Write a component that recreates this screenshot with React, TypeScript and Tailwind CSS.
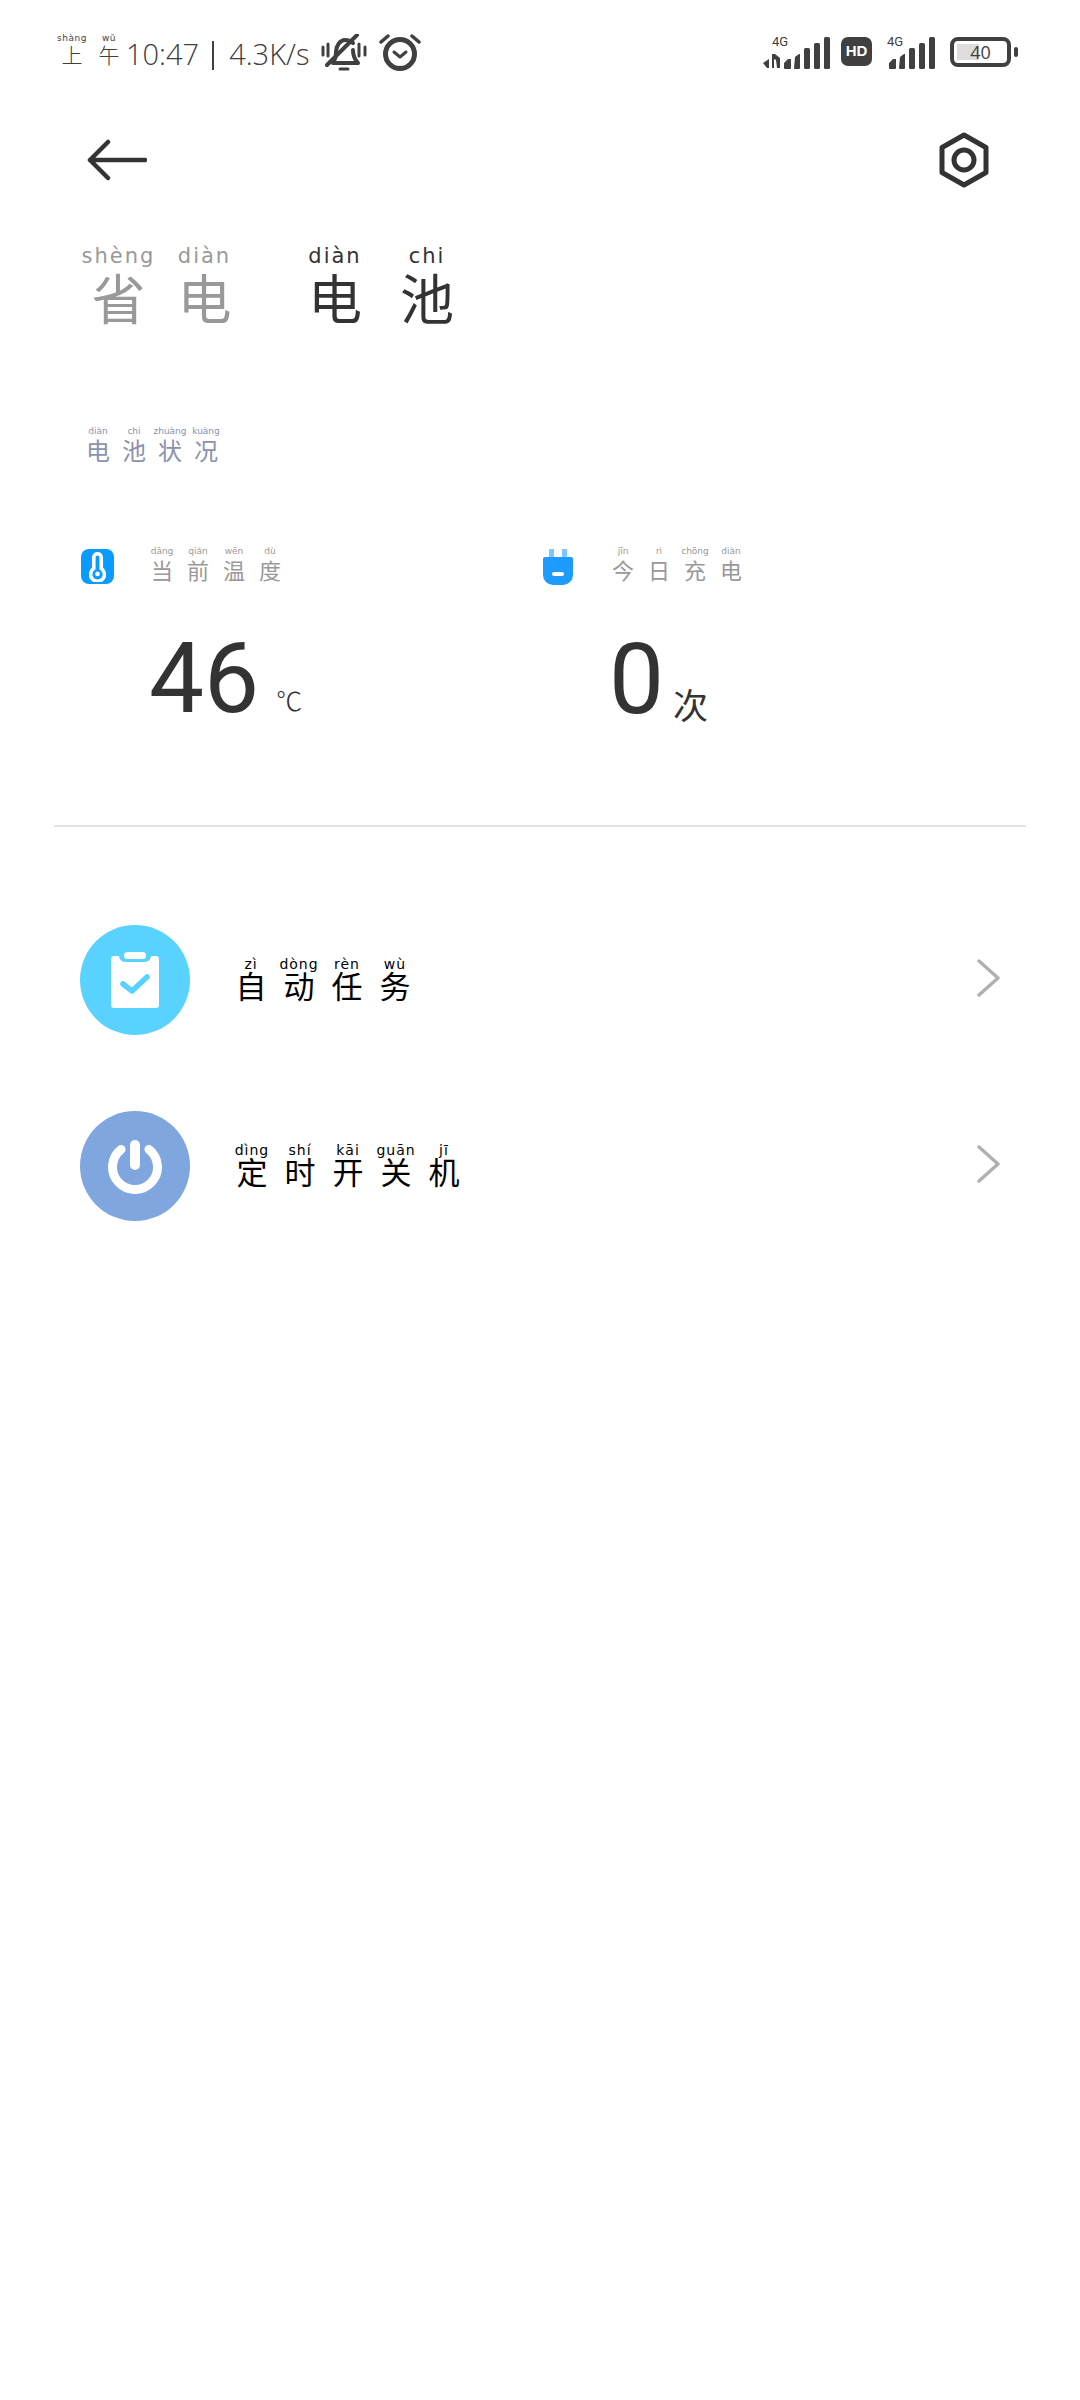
type Pair = [string, string];

// one character with its pinyin on top
function StatusChar({ py, ch, w }: { py: string; ch: string; w: string }) {
  return (
    <div className={`flex flex-col items-center ${w}`}>
      <span className="text-[9px] leading-[10px] h-[10px] tracking-[0.5px] font-['DejaVu_Sans',sans-serif] whitespace-nowrap">{py}</span>
      <span className="text-[21px] leading-[22px] font-light">{ch}</span>
    </div>
  );
}

function Word({ items, cell, py, ch, color }: { items: Pair[]; cell: string; py: string; ch: string; color: string }) {
  return (
    <div className={`flex ${color}`}>
      {items.map(([p, c], i) => (
        <div key={i} className={`flex flex-col items-center ${cell}`}>
          <span className={`${py} whitespace-nowrap font-['DejaVu_Sans',sans-serif]`}>{p}</span>
          <span className={ch}>{c}</span>
        </div>
      ))}
    </div>
  );
}

function SignalBars({ lost }: { lost?: boolean }) {
  return (
    <svg width={lost ? 68 : 48} height="32" viewBox={lost ? "0 0 68 32" : "20 0 48 32"} fill="#404040">
      {lost && (
        <>
          <path d="M0 26l6-4v9H4z" />
          <path d="M9 17h3l5 4v10h-3l-1-8-2-1v9H9z" />
        </>
      )}
      <path d="M21 26l4-4h3v9a1 1 0 0 1-1 1h-5a1 1 0 0 1-1-1z" />
      <path d="M32 20l4-3h1v14a1 1 0 0 1-1 1h-4a1 1 0 0 1-1-1z" />
      <rect x="41" y="11" width="6" height="21" rx="1.5" />
      <rect x="51" y="6" width="6" height="26" rx="1.5" />
      <rect x="61" y="0" width="6" height="32" rx="1.5" />
    </svg>
  );
}

function Chevron() {
  return (
    <svg width="24" height="40" viewBox="0 0 24 40" fill="none" stroke="#b0b0b0" strokeWidth="3.4" strokeLinecap="round" strokeLinejoin="round">
      <path d="M3 3l19 17L3 37" />
    </svg>
  );
}

export default function App() {
  return (
    <div className="flex flex-col w-[1080px] h-[2400px] bg-white text-[#333333] font-['Noto_Sans_CJK_SC',sans-serif] overflow-hidden">
      {/* status bar */}
      <div className="flex justify-between h-[110px] pl-[56px] pr-[62px] pt-[33px] text-[#404040]">
        <div className="flex items-start">
          <StatusChar py="shàng" ch="上" w="w-[32px]" />
          <StatusChar py="wǔ" ch="午" w="w-[30px] ml-[6px]" />
          <span className="ml-[2px] mt-[5px] text-[29px] leading-[32px] font-['Open_Sans',sans-serif] font-light">10:47</span>
          <span className="ml-[13px] mt-[8px] w-[2px] h-[29px] bg-[#404040]" />
          <span className="ml-[15px] mt-[5px] text-[29px] leading-[32px] font-['Open_Sans',sans-serif] font-light">4.3K/s</span>
          <svg className="ml-[12px] mt-[1px]" width="46" height="40" viewBox="0 0 46 40" fill="none" stroke="#404040" strokeLinecap="round" strokeLinejoin="round">
            <path strokeWidth="4" d="M12 28c3-3 3-6 3-10 0-6 4-12 9-12 3 0 6 1 8 3M32 16c0 5 1 9 5 13H12" />
            <path strokeWidth="4" d="M6 31L36 1" />
            <path strokeWidth="3" d="M2 13v8M7 10v12M38 10v12M44 13v8" />
            <path strokeWidth="3" d="M19 35h8" />
          </svg>
          <svg className="ml-[12px]" width="42" height="38" viewBox="0 0 42 38" fill="none" stroke="#404040" strokeLinecap="round" strokeLinejoin="round">
            <circle cx="21" cy="21" r="14.5" strokeWidth="5" />
            <path strokeWidth="3" d="M15 19l6 5 6-5" />
            <path strokeWidth="3.5" d="M2 9l7-6M40 9l-7-6" />
          </svg>
        </div>
        <div className="flex items-start">
          <div className="relative mt-[4px]">
            <span className="absolute left-[9px] -top-[2px] text-[13px] leading-[14px] font-['Roboto',sans-serif]">4G</span>
            <SignalBars lost />
          </div>
          <div className="ml-[10px] mt-[4px] flex items-center justify-center w-[31px] h-[29px] rounded-[7px] bg-[#404040] text-white text-[15px] font-black font-['Liberation_Sans',sans-serif]">
            HD
          </div>
          <div className="relative ml-[16px] mt-[4px]">
            <span className="absolute -left-[1px] -top-[2px] text-[13px] leading-[14px] font-['Roboto',sans-serif]">4G</span>
            <SignalBars />
          </div>
          <div className="ml-[14px] mt-[4px] flex items-center">
            <div className="relative flex items-center justify-center w-[61px] h-[30px] rounded-[8px] border-[4px] border-[#404040]">
              <div className="absolute left-[3px] top-[3px] bottom-[3px] w-[22px] bg-[#dddddd]" />
              <span className="relative text-[18px] leading-[20px] font-['Open_Sans',sans-serif]">40</span>
            </div>
            <div className="ml-[3px] w-[4px] h-[10px] rounded-[2px] bg-[#404040]" />
          </div>
        </div>
      </div>

      {/* header */}
      <div className="flex justify-between items-center h-[100px] pl-[87px] pr-[90px]">
        <svg width="60" height="42" viewBox="0 0 60 42" fill="none" stroke="#333333" strokeWidth="4.5" strokeLinecap="round" strokeLinejoin="round">
          <path d="M58 21H3M21 3L3 21l18 18" />
        </svg>
        <svg width="52" height="56" viewBox="0 0 52 56" fill="none" stroke="#333333" strokeLinejoin="round">
          <path strokeWidth="5" d="M26 3l22 12.5v25L26 53 4 40.5v-25z" />
          <circle cx="26" cy="28" r="10" strokeWidth="5" />
        </svg>
      </div>

      {/* tabs */}
      <div className="flex mt-[35px] pl-[82px]">
        <Word
          items={[["shèng", "省"], ["diàn", "电"]]}
          cell="w-[73px] mr-[13px] last:mr-0"
          py="text-[21px] leading-[22px] tracking-[2px]"
          ch="text-[54px] leading-[60px]"
          color="text-[#999999]"
        />
        <div className="ml-[64px]">
          <Word
            items={[["diàn", "电"], ["chi", "池"]]}
            cell="w-[60px] mr-[32px] last:mr-0"
            py="text-[21px] leading-[22px] tracking-[2px]"
            ch="text-[54px] leading-[60px]"
            color="text-[#333333]"
          />
        </div>
      </div>

      {/* section title */}
      <div className="mt-[99px] pl-[80px]">
        <Word
          items={[["diàn", "电"], ["chi", "池"], ["zhuàng", "状"], ["kuàng", "况"]]}
          cell="w-[36px]"
          py="text-[9px] leading-[11px]"
          ch="text-[24px] leading-[26px]"
          color="text-[#8a92ad]"
        />
      </div>

      {/* stats */}
      <div className="flex mt-[83px]">
        <div className="flex flex-col w-[462px] pl-[81px]">
          <div className="flex items-start">
            <div className="flex items-center justify-center w-[33px] h-[35px] mt-[3px] rounded-[8px] bg-[#0a9bff]">
              <svg width="17" height="30" viewBox="0 0 16 28" fill="none" stroke="#ffffff" strokeWidth="3.4">
                <path d="M4.5 15.5V5a3.5 3.5 0 0 1 7 0v10.5a6.5 6.5 0 1 1-7 0z" />
                <circle cx="8" cy="20.5" r="2.2" fill="#ffffff" stroke="none" />
              </svg>
            </div>
            <div className="ml-[30px]">
              <Word
                items={[["dāng", "当"], ["qián", "前"], ["wēn", "温"], ["dù", "度"]]}
                cell="w-[36px]"
                py="text-[9px] leading-[10px]"
                ch="text-[22px] leading-[26px]"
                color="text-[#999999]"
              />
            </div>
          </div>
          <div className="flex items-end ml-[68px] mt-[45px] h-[100px]">
            <span className="text-[98px] leading-[100px] font-['Roboto',sans-serif] font-normal">46</span>
            <span className="ml-[17px] mb-[12px] text-[26px] leading-[34px] font-light">℃</span>
          </div>
        </div>
        <div className="flex flex-col pl-[81px]">
          <div className="flex items-start">
            <svg width="30" height="36" viewBox="0 0 30 36" className="shrink-0 mt-[3px]">
              <rect x="6" y="0" width="5" height="10" fill="#7cc8ff" />
              <rect x="19" y="0" width="5" height="10" fill="#7cc8ff" />
              <path d="M0 10a2 2 0 0 1 2-2h26a2 2 0 0 1 2 2v16a10 10 0 0 1-10 10H10A10 10 0 0 1 0 26z" fill="#1e9bff" />
              <rect x="9" y="23" width="12" height="4" rx="2" fill="#ffffff" />
            </svg>
            <div className="ml-[32px]">
              <Word
                items={[["jīn", "今"], ["rì", "日"], ["chōng", "充"], ["diàn", "电"]]}
                cell="w-[36px]"
                py="text-[9px] leading-[10px]"
                ch="text-[22px] leading-[26px]"
                color="text-[#999999]"
              />
            </div>
          </div>
          <div className="flex items-end ml-[66px] mt-[45px] h-[100px]">
            <span className="text-[98px] leading-[100px] font-['Roboto',sans-serif] font-normal">0</span>
            <span className="ml-[9px] mb-[6px] text-[35px] leading-[40px]">次</span>
          </div>
        </div>
      </div>

      <div className="h-[2px] mt-[95px] mx-[54px] bg-[#e4e4e4]" />

      {/* menu rows */}
      <div className="flex flex-col mt-[98px] pl-[80px] pr-[80px] gap-[76px]">
        <div className="flex items-center">
          <div className="flex items-center justify-center w-[110px] h-[110px] rounded-full bg-[#5ad2ff]">
            <svg width="50" height="56" viewBox="0 0 50 56">
              <path d="M4 4h5a6 6 0 0 0 6 6h20a6 6 0 0 0 6-6h5a3 3 0 0 1 3 3v46a3 3 0 0 1-3 3H4a3 3 0 0 1-3-3V7a3 3 0 0 1 3-3z" fill="#ffffff" />
              <rect x="14" y="0" width="22" height="7" rx="3.5" fill="#ffffff" />
              <path d="M13 32l9 7 15-14" fill="none" stroke="#5ad2ff" strokeWidth="5.5" strokeLinecap="round" strokeLinejoin="round" />
            </svg>
          </div>
          <div className="ml-[37px] mt-[-4px]">
            <Word
              items={[["zì", "自"], ["dòng", "动"], ["rèn", "任"], ["wù", "务"]]}
              cell="w-[48px]"
              py="text-[14px] leading-[14px] tracking-[1px]"
              ch="text-[31px] leading-[28px]"
              color="text-black"
            />
          </div>
          <div className="ml-auto mt-[-4px]">
            <Chevron />
          </div>
        </div>
        <div className="flex items-center">
          <div className="flex items-center justify-center w-[110px] h-[110px] rounded-full bg-[#7fa6df]">
            <svg width="56" height="56" viewBox="0 0 56 56" fill="none" stroke="#ffffff" strokeLinecap="round">
              <path strokeWidth="9" d="M14 11.4A22.5 22.5 0 1 0 42 11.4" />
              <path strokeWidth="10" d="M28 7v20" />
            </svg>
          </div>
          <div className="ml-[38px] mt-[-4px]">
            <Word
              items={[["dìng", "定"], ["shí", "时"], ["kāi", "开"], ["guān", "关"], ["jī", "机"]]}
              cell="w-[48px]"
              py="text-[14px] leading-[14px] tracking-[1px]"
              ch="text-[31px] leading-[28px]"
              color="text-black"
            />
          </div>
          <div className="ml-auto mt-[-4px]">
            <Chevron />
          </div>
        </div>
      </div>
    </div>
  );
}
